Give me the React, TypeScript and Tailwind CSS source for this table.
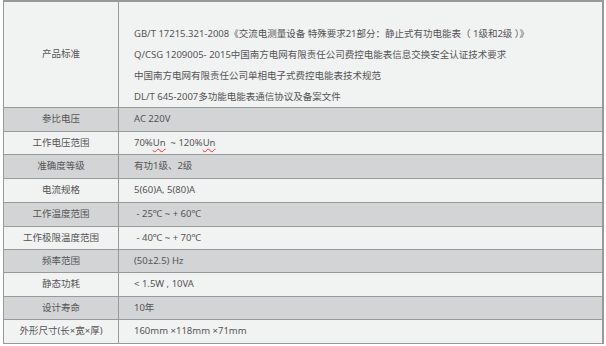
import React from 'react';

type Row = {
  label: string;
  value: React.ReactNode;
  h: string;
  dark: boolean;
};

const Un = () => <span className="underline decoration-wavy decoration-red-500 decoration-1 underline-offset-2">Un</span>;

const rows: Row[] = [
  { label: '参比电压', value: 'AC 220V', h: 'h-[24px]', dark: true },
  {
    label: '工作电压范围',
    value: (
      <>
        70%<Un />&nbsp; ~ 120%<Un />
      </>
    ),
    h: 'h-[23px]',
    dark: false,
  },
  { label: '准确度等级', value: '有功1级、2级', h: 'h-[24px]', dark: true },
  { label: '电流规格', value: '5(60)A, 5(80)A', h: 'h-[24px]', dark: false },
  { label: '工作温度范围', value: '\u00a0- 25℃ ~ + 60℃', h: 'h-[24px]', dark: true },
  { label: '工作极限温度范围', value: '\u00a0- 40℃ ~ + 70℃', h: 'h-[23px]', dark: false },
  { label: '频率范围', value: '(50±2.5) Hz', h: 'h-[23px]', dark: true },
  { label: '静态功耗', value: '< 1.5W , 10VA', h: 'h-[24px]', dark: false },
  { label: '设计寿命', value: '10年', h: 'h-[23px]', dark: true },
  { label: '外形尺寸(长×宽×厚)', value: '160mm ×118mm ×71mm', h: 'h-[24px]', dark: false },
];

const standards = [
  'GB/T 17215.321-2008《交流电测量设备 特殊要求21部分：静止式有功电能表（ 1级和2级 ）》',
  'Q/CSG 1209005- 2015中国南方电网有限责任公司费控电能表信息交换安全认证技术要求',
  '中国南方电网有限责任公司单相电子式费控电能表技术规范',
  'DL/T 645-2007多功能电能表通信协议及备案文件',
];

export default function App() {
  return (
    <div
      className="w-[606px] h-[346px] bg-white text-[9.5px] text-[#555]"
      style={{ fontFamily: '"Noto Sans", "Noto Sans CJK SC", sans-serif' }}
    >
      <div className="ml-[3px] w-[601px] border-t-2 border-l border-r-2 border-[#999]">
        {/* 产品标准 */}
        <div className="flex h-[106px] bg-[#f1f2f2] border-b border-[#999]">
          <div className="w-[115px] shrink-0 border-r border-[#999] flex items-center justify-center">
            产品标准
          </div>
          <div className="flex-1 pl-[15px] pt-[21px]">
            {standards.map((s) => (
              <p key={s} className="leading-[21px] whitespace-nowrap">
                {s}
              </p>
            ))}
          </div>
        </div>

        {rows.map((r) => (
          <div
            key={r.label}
            className={`flex ${r.h} border-b border-[#999] ${r.dark ? 'bg-[#d3d4d6]' : 'bg-[#f1f2f2]'}`}
          >
            <div className="w-[115px] shrink-0 border-r border-[#999] flex items-center justify-center whitespace-nowrap">
              {r.label}
            </div>
            <div className="flex-1 pl-[15px] flex items-center whitespace-nowrap">{r.value}</div>
          </div>
        ))}
      </div>
    </div>
  );
}
